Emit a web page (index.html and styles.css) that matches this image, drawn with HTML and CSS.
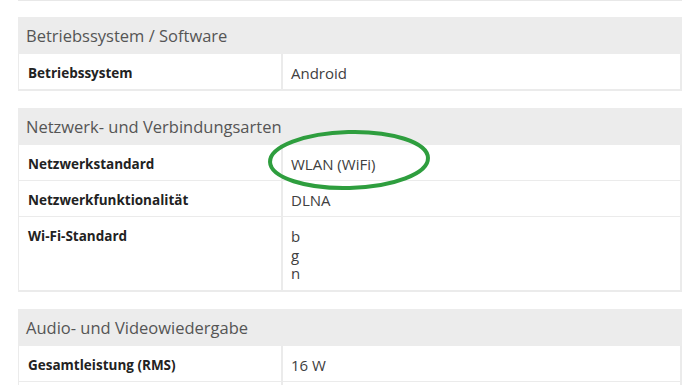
FILE: index.html
```html
<!DOCTYPE html>
<html lang="de">
<head>
<meta charset="utf-8">
<title>Technische Daten</title>
<link rel="stylesheet" href="styles.css">
</head>
<body>
<div class="specs">
  <div class="prev-end"></div>

  <section class="group">
    <h3 class="group-title">Betriebssystem / Software</h3>
    <div class="row">
      <div class="label">Betriebssystem</div>
      <div class="value">Android</div>
    </div>
  </section>

  <section class="group">
    <h3 class="group-title">Netzwerk- und Verbindungsarten</h3>
    <div class="row">
      <div class="label">Netzwerkstandard</div>
      <div class="value">WLAN (WiFi)</div>
    </div>
    <div class="row">
      <div class="label">Netzwerkfunktionalität</div>
      <div class="value">DLNA</div>
    </div>
    <div class="row">
      <div class="label">Wi-Fi-Standard</div>
      <div class="value list">b<br>g<br>n</div>
    </div>
  </section>

  <section class="group">
    <h3 class="group-title">Audio- und Videowiedergabe</h3>
    <div class="row">
      <div class="label">Gesamtleistung (RMS)</div>
      <div class="value">16 W</div>
    </div>
    <div class="row">
      <div class="label">&nbsp;</div>
      <div class="value">&nbsp;</div>
    </div>
  </section>

  <!-- hand-drawn highlight around the network standard -->
  <svg class="marker" width="170" height="68" viewBox="0 0 170 68">
    <ellipse cx="84" cy="34" rx="79" ry="28" fill="none" stroke="#2e9e3e" stroke-width="4" transform="rotate(-1.5 84 34)"/>
  </svg>
</div>
</body>
</html>
```
FILE: styles.css
```css
html, body {
  margin: 0;
  background: #fff;
}

body {
  font-family: "Open Sans", "Liberation Sans", sans-serif;
  color: #444;
  overflow: hidden;
}

.specs {
  position: relative;
  width: 664px;
  margin-left: 18px;
}

.prev-end {
  height: 0;
  border-top: 1px solid #e8e8e8;
  margin-bottom: 16px;
}

.group {
  margin: 0 0 17px;
  border-left: 1px solid #ebebeb;
  border-right: 2px solid #ebebeb;
  border-bottom: 2px solid #ebebeb;
}

.group-title {
  margin: 0 -2px 0 -1px;
  height: 37px;
  padding: 0 8px;
  background: #ececec;
  font-size: 16.5px;
  font-weight: 400;
  line-height: 38px;
  color: #555;
}

.row {
  display: grid;
  grid-template-columns: 264px 1fr;
  border-top: 1px solid #ebebeb;
}

.row:first-of-type {
  border-top: 0;
}

.label,
.value {
  padding: 10px 9px 7px;
  line-height: 18px;
}

.label {
  font-size: 13.5px;
  font-weight: 700;
  color: #222;
  border-right: 2px solid #ebebeb;
}

.value {
  padding-left: 8px;
  font-size: 15px;
  color: #404040;
}

.value.list {
  line-height: 18.7px;
}

.marker {
  position: absolute;
  left: 247px;
  top: 126px;
}
```
